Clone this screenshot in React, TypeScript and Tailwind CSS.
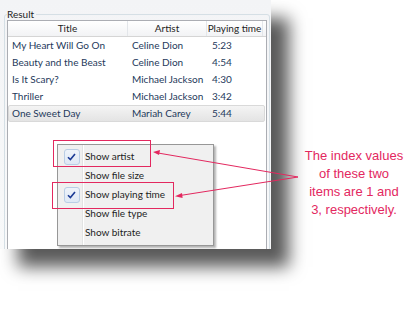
import React from 'react';

const songs = [
  { title: 'My Heart Will Go On', artist: 'Celine Dion', time: '5:23' },
  { title: 'Beauty and the Beast', artist: 'Celine Dion', time: '4:54' },
  { title: 'Is It Scary?', artist: 'Michael Jackson', time: '4:30' },
  { title: 'Thriller', artist: 'Michael Jackson', time: '3:42' },
  { title: 'One Sweet Day', artist: 'Mariah Carey', time: '5:44' },
];

const menuItems = [
  { label: 'Show artist', checked: true },
  { label: 'Show file size', checked: false },
  { label: 'Show playing time', checked: true },
  { label: 'Show file type', checked: false },
  { label: 'Show bitrate', checked: false },
];

function CheckMark() {
  return (
    <div className="w-[16px] h-[16px] rounded-[3px] border border-[#b9cde5] bg-gradient-to-b from-[#eef3fa] to-[#dfe8f5] flex items-center justify-center">
      <svg width="9" height="8" viewBox="0 0 9 8">
        <path d="M1 4.2 L3.4 6.6 L8 1" fill="none" stroke="#1b3a95" strokeWidth="1.6" />
      </svg>
    </div>
  );
}

export default function App() {
  return (
    <div className="relative w-[420px] h-[309px] bg-white overflow-hidden font-['Lato',sans-serif] text-[10px] whitespace-nowrap">
      {/* window */}
      <div className="w-[271px] h-[249px] bg-gradient-to-b from-[#f3f4f6] to-[#f8f9fa] shadow-[18px_18px_16px_rgba(0,0,0,0.65)] overflow-hidden pl-[4px] pr-[1px] pt-[7px]">
        <fieldset className="border border-[#d5dfe5] rounded-[3px] h-[260px] px-[2px] pb-[2px]">
          <legend className="ml-0 pr-[2px] leading-[14px] text-[#1e1e1e]">Result</legend>
          <div className="-mt-[1px] h-[250px] border border-[#abadb3] bg-white">
            <div className="flex h-[16px] bg-gradient-to-b from-white to-[#f2f3f5] border-b border-[#d5d5d5] text-[#1e1e1e] leading-[15px]">
              <div className="w-[120px] text-center border-r border-[#e3e6ea]">Title</div>
              <div className="w-[79px] text-center border-r border-[#e3e6ea]">Artist</div>
              <div className="w-[56px] text-center border-r border-[#e3e6ea]">Playing time</div>
              <div className="flex-1" />
            </div>
            <div className="text-[#1e395b]">
              {songs.map((s, i) => (
                <div
                  key={i}
                  className={`flex h-[17px] items-center leading-[15px] ${i === 4 ? 'mr-[1px] rounded-[2px] border border-[#d9d9d9] bg-gradient-to-b from-[#f4f4f4] to-[#e4e4e4]' : 'border border-transparent'}`}
                >
                  <div className="w-[119px] pl-[3px]">{s.title}</div>
                  <div className="w-[79px] pl-[4px]">{s.artist}</div>
                  <div className="w-[56px] pl-[5px]">{s.time}</div>
                </div>
              ))}
            </div>
          </div>
        </fieldset>
      </div>

      {/* context menu */}
      <div className="absolute left-[57px] top-[144px] w-[157px] h-[102px] border border-[#979797] bg-[#f0f0f0] shadow-[2px_2px_2px_rgba(0,0,0,0.3)] flex">
        <div className="w-[25px] border-r border-[#e2e3e3]" />
        <div className="w-[1px] bg-white" />
        <div className="flex-1 py-[2px] -ml-[27px]">
          {menuItems.map((m, i) => (
            <div key={i} className="flex items-center h-[19px] text-[#1e1e1e]">
              <div className="w-[27px] flex justify-center pl-[2px]">{m.checked && <CheckMark />}</div>
              <div className="pl-[1px]">{m.label}</div>
            </div>
          ))}
        </div>
      </div>

      {/* callout boxes */}
      <div className="absolute left-[53px] top-[140px] w-[98px] h-[27px] border border-[#e3285f]" />
      <div className="absolute left-[52px] top-[182px] w-[122px] h-[27px] border border-[#e3285f]" />

      {/* arrows */}
      <svg className="absolute left-0 top-0" width="420" height="309">
        <line x1="298" y1="177" x2="158" y2="153" stroke="#e3285f" strokeWidth="1" />
        <line x1="298" y1="177" x2="180" y2="195.5" stroke="#e3285f" strokeWidth="1" />
        <path d="M153 152 L160 150 L159 155 Z" fill="#e3285f" />
        <path d="M175 196.3 L182 193 L182.6 198 Z" fill="#e3285f" />
      </svg>

      <div className="absolute left-[299px] top-[147px] w-[110px] text-center text-[13px] leading-[18px] text-[#e3285f] font-['Liberation_Sans',sans-serif]">
        The index values
        <br />
        of these two
        <br />
        items are 1 and
        <br />
        3, respectively.
      </div>
    </div>
  );
}
